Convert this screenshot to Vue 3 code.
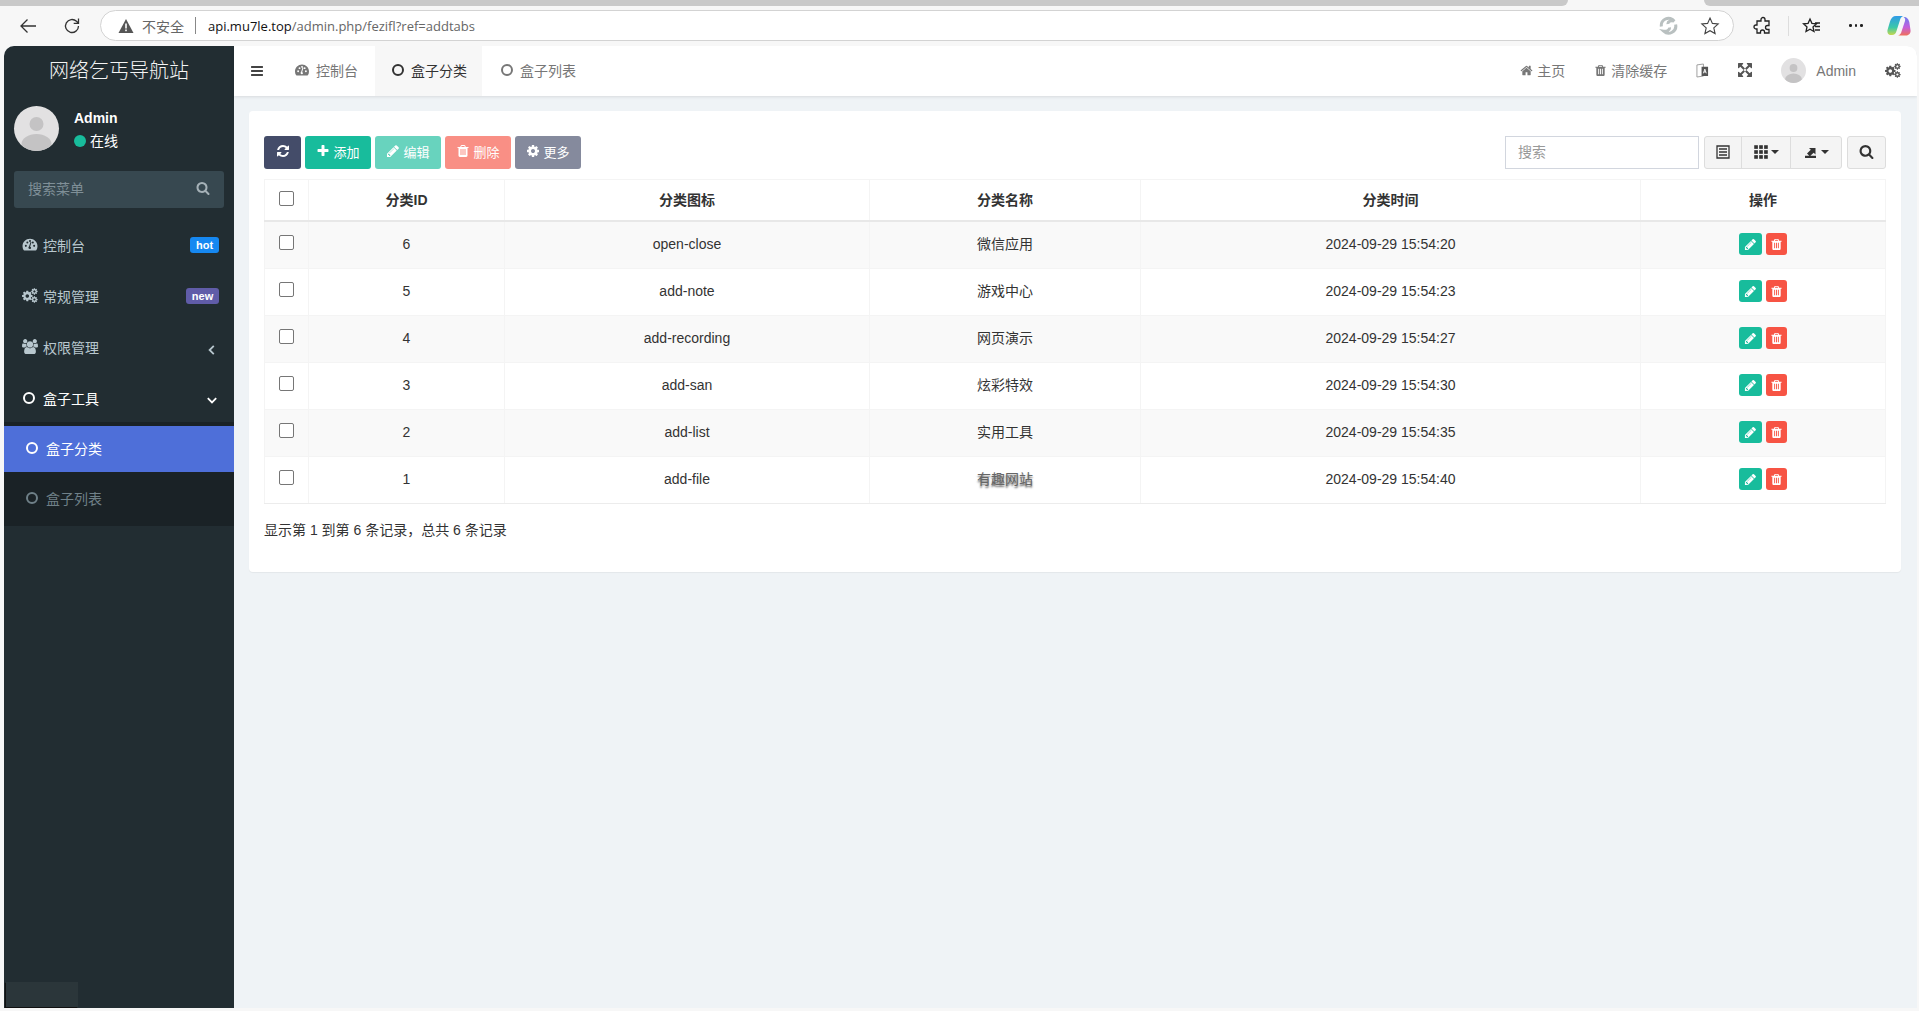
<template>
  <div class="window">
    <div class="tabstrip">
      <div class="strip-tab strip-left"></div>
      <div class="strip-tab strip-right"></div>
    </div>

    <div class="browserbar">
      <svg class="nav-icon back" viewBox="0 0 20 20"><path d="M18 10H3M9.500 3.500 3 10l6.500 6.500" /></svg>
      <svg class="nav-icon reload" viewBox="0 0 20 20"><path d="M16.500 10a6.500 6.500 0 1 1-2-4.700L16.500 7.300M16.500 2.500v4.800h-4.800" /></svg>
      <div class="addressbar">
        <svg class="warn" viewBox="0 0 16 16"><path d="M8 1 15.500 15H.5z" /><rect x="7.200" y="5.500" width="1.600" height="5" fill="#fff" /><rect x="7.200" y="11.500" width="1.600" height="1.700" fill="#fff" /></svg>
        <span class="unsafe">不安全</span>
        <i class="addr-sep"></i>
        <span class="url"><b>api.mu7le.top</b>/admin.php/fezifl?ref=addtabs</span>
        <svg class="addr-swirl" viewBox="0 0 20 20"><path d="M2.500 11A7.500 7.500 0 0 1 16 5.500C13 4 9 5.500 9.500 8.500M17.500 9A7.500 7.500 0 0 1 5 16c3 .5 6.500-1 6-4" /></svg>
        <svg class="addr-star" viewBox="0 0 20 20"><path d="m10 2 2.400 5.400 5.800.6-4.400 3.900 1.300 5.700L10 14.700l-5.100 2.900 1.300-5.700L1.800 8l5.800-.6z" /></svg>
      </div>
      <svg class="bar-icon puzzle" viewBox="0 0 20 20"><path d="M8 3.500a2 2 0 0 1 4 0V5h4v4.500h-1.500a2 2 0 0 0 0 4H16V17h-4.500v-1a2 2 0 0 0-4 0v1H4v-4H3a2 2 0 0 1 0-4h1V5h4z" /></svg>
      <i class="bar-sep"></i>
      <svg class="bar-icon favs" viewBox="0 0 20 20"><path d="m8 3 1.900 4.300 4.600.5-3.500 3.100 1 4.600L8 13.200l-4 2.300 1-4.600L1.500 7.800l4.600-.5zM13 7h5M13 10.500h5M13 14h5" /></svg>
      <div class="dots"><i></i><i></i><i></i></div>
      <svg class="copilot" viewBox="0 0 24 24">
        <defs>
          <linearGradient id="copA" x1="0" y1="0" x2="0" y2="1"><stop offset="0" stop-color="#2f9be8" /><stop offset=".6" stop-color="#3cc8a8" /><stop offset="1" stop-color="#c6d84e" /></linearGradient>
          <linearGradient id="copB" x1="0" y1="0" x2="0" y2="1"><stop offset="0" stop-color="#6d7cf0" /><stop offset=".55" stop-color="#c45fdc" /><stop offset="1" stop-color="#f0705a" /></linearGradient>
        </defs>
        <path fill="url(#copA)" d="M9 2h7.500c-2 .5-3 2-3.500 4l-3.500 11c-.7 2.500-2 4-4.500 4H4c-2.500 0-4-2-3.500-5L3 7.500C4 4 6 2 9 2z" />
        <path fill="url(#copB)" d="M16.500 3c3.500 0 5 2 5.800 5l1.200 8c.5 3-1.500 5.500-4.500 5.500H11c2-.5 3-2 3.500-4L18 7c.5-1.500 0-3-1.500-4z" />
      </svg>
    </div>

    <div class="app">
      <aside class="sidebar">
        <div class="logo">网络乞丐导航站</div>
        <div class="user-panel">
          <div class="avatar avatar-lg">
            <svg viewBox="0 0 45 45"><circle cx="22.500" cy="18" r="7" /><ellipse cx="22.500" cy="38" rx="15" ry="10" /></svg>
          </div>
          <div class="user-info">
            <div class="user-name">Admin</div>
            <div class="user-status"><i class="dot"></i>在线</div>
          </div>
        </div>
        <div class="side-search">
          <span>搜索菜单</span>
          <svg class="fa" viewBox="0 0 1792 1792"><path :d="icons.search" /></svg>
        </div>

        <ul class="menu">
          <li class="menu-item">
            <svg class="fa menu-icon" viewBox="0 0 1792 1792"><path fill-rule="evenodd" :d="icons.dashboard" /></svg>
            <span>控制台</span>
            <em class="badge badge-hot">hot</em>
          </li>
          <li class="menu-item">
            <svg class="fa menu-icon" viewBox="0 0 1920 1792">
              <g transform="translate(-100 210) scale(.82)"><path :d="icons.cog" /></g>
              <g transform="translate(1040 -40) scale(.5)"><path :d="icons.cog" /></g>
              <g transform="translate(1040 930) scale(.5)"><path :d="icons.cog" /></g>
            </svg>
            <span>常规管理</span>
            <em class="badge badge-new">new</em>
          </li>
          <li class="menu-item">
            <svg class="fa menu-icon" viewBox="0 0 1920 1792"><path :d="icons.users" /></svg>
            <span>权限管理</span>
            <svg class="chevron" viewBox="0 0 10 10"><path d="M6.500 1.500 3 5l3.500 3.500" /></svg>
          </li>
          <li class="menu-item menu-open">
            <i class="ring"></i>
            <span>盒子工具</span>
            <svg class="chevron" viewBox="0 0 10 10"><path d="M1.500 3.500 5 7l3.500-3.500" /></svg>
          </li>
        </ul>
        <ul class="submenu">
          <li class="sub-item sub-active"><i class="ring"></i><span>盒子分类</span></li>
          <li class="sub-item"><i class="ring"></i><span>盒子列表</span></li>
        </ul>
        <div class="corner-ghost"></div>
      </aside>

      <div class="main">
        <header class="topbar">
          <svg class="fa hamburger" viewBox="0 0 1792 1792"><path :d="icons.bars" /></svg>
          <nav class="tabs">
            <div class="tab">
              <svg class="fa" viewBox="0 0 1792 1792"><path fill-rule="evenodd" :d="icons.dashboard" /></svg>
              <span>控制台</span>
            </div>
            <div class="tab tab-active"><i class="ring"></i><span>盒子分类</span></div>
            <div class="tab"><i class="ring"></i><span>盒子列表</span></div>
          </nav>
          <div class="top-actions">
            <div class="top-link">
              <svg class="fa" viewBox="0 0 1792 1792"><path :d="icons.home" /></svg>
              <span>主页</span>
            </div>
            <div class="top-link">
              <svg class="fa" viewBox="0 0 1792 1792"><path :d="icons.trash" /></svg>
              <span>清除缓存</span>
            </div>
            <svg class="translate" viewBox="0 0 14 16">
              <path d="M1 2 8 1v13l-7 1z" fill="#fff" stroke="#999" stroke-width="1" />
              <path d="M6 4h7v10H6z" fill="#555" />
              <path d="M8 11l1.500-4.500L11 11M8.500 9.500h2" stroke="#fff" stroke-width="1" fill="none" />
            </svg>
            <svg class="fa expand" viewBox="128 128 1536 1536"><path :d="icons.expand" /></svg>
            <div class="top-user">
              <div class="avatar avatar-sm">
                <svg viewBox="0 0 45 45"><circle cx="22.500" cy="18" r="7" /><ellipse cx="22.500" cy="38" rx="15" ry="10" /></svg>
              </div>
              <span>Admin</span>
            </div>
            <svg class="fa top-cogs" viewBox="0 0 1920 1792">
              <g transform="translate(-100 210) scale(.82)"><path :d="icons.cog" /></g>
              <g transform="translate(1040 -40) scale(.5)"><path :d="icons.cog" /></g>
              <g transform="translate(1040 930) scale(.5)"><path :d="icons.cog" /></g>
            </svg>
          </div>
        </header>

        <section class="content">
          <div class="card">
            <div class="toolbar">
              <button class="btn btn-navy btn-refresh">
                <svg class="fa" viewBox="0 0 1792 1792"><path :d="icons.refresh" /></svg>
              </button>
              <button class="btn btn-teal">
                <svg class="fa" viewBox="0 0 1792 1792"><path :d="icons.plus" /></svg>添加
              </button>
              <button class="btn btn-teal btn-faded">
                <svg class="fa" viewBox="0 0 1792 1792"><path :d="icons.pencil" /></svg>编辑
              </button>
              <button class="btn btn-red btn-faded">
                <svg class="fa" viewBox="0 0 1792 1792"><path :d="icons.trash" /></svg>删除
              </button>
              <button class="btn btn-navy btn-faded">
                <svg class="fa" viewBox="0 0 1792 1792"><path :d="icons.cog" /></svg>更多
              </button>

              <input class="table-search" placeholder="搜索" />
              <div class="btn-group">
                <button class="tool-btn tool-list">
                  <svg viewBox="0 0 14 14" class="tool-svg"><path d="M1 1h12v12H1zM3 4h8M3 7h8M3 10h8" fill="none" stroke="#333" stroke-width="1.300" /></svg>
                </button>
                <button class="tool-btn tool-cols">
                  <svg viewBox="0 0 13 13" class="tool-svg">
                    <rect v-for="c in gridCells" :key="c.k" :x="c.x" :y="c.y" width="3.400" height="3.400" fill="#333" />
                  </svg>
                  <i class="caret"></i>
                </button>
                <button class="tool-btn tool-export">
                  <svg viewBox="0 0 14 14" class="tool-svg"><path d="M1 10.800h11V13H1zM3 8.500 6.800 4.800 5 3h6.500v6.500L9.700 7.700 5.800 11.200z" fill="#333" /></svg>
                  <i class="caret"></i>
                </button>
              </div>
              <button class="tool-btn tool-search">
                <svg class="fa" viewBox="0 0 1792 1792"><path :d="icons.search" /></svg>
              </button>
            </div>

            <table class="grid">
              <thead>
                <tr>
                  <th><i class="check"></i></th>
                  <th>分类ID</th>
                  <th>分类图标</th>
                  <th>分类名称</th>
                  <th>分类时间</th>
                  <th>操作</th>
                </tr>
              </thead>
              <tbody>
                <tr v-for="row in rows" :key="row.id">
                  <td><i class="check"></i></td>
                  <td>{{ row.id }}</td>
                  <td>{{ row.icon }}</td>
                  <td class="name-cell"><span :class="{ smeared: row.id === 1 }">{{ row.name }}</span></td>
                  <td>{{ row.time }}</td>
                  <td>
                    <div class="ops">
                      <span class="op op-edit"><svg class="fa" viewBox="0 0 1792 1792"><path :d="icons.pencil" /></svg></span>
                      <span class="op op-del"><svg class="fa" viewBox="0 0 1792 1792"><path :d="icons.trash" /></svg></span>
                    </div>
                  </td>
                </tr>
              </tbody>
            </table>

            <div class="pager">显示第 1 到第 6 条记录，总共 6 条记录</div>
          </div>
        </section>
      </div>
    </div>
  </div>
</template>

<script setup>
const rows = [
  { id: 6, icon: 'open-close', name: '微信应用', time: '2024-09-29 15:54:20' },
  { id: 5, icon: 'add-note', name: '游戏中心', time: '2024-09-29 15:54:23' },
  { id: 4, icon: 'add-recording', name: '网页演示', time: '2024-09-29 15:54:27' },
  { id: 3, icon: 'add-san', name: '炫彩特效', time: '2024-09-29 15:54:30' },
  { id: 2, icon: 'add-list', name: '实用工具', time: '2024-09-29 15:54:35' },
  { id: 1, icon: 'add-file', name: '有趣网站', time: '2024-09-29 15:54:40' }
]

const gridCells = []
for (let y = 0; y < 3; y++) {
  for (let x = 0; x < 3; x++) {
    gridCells.push({ k: x + '-' + y, x: x * 4.600 + .200, y: y * 4.600 + .200 })
  }
}

const icons = {
  search: 'M1216 832q0-185-131.500-316.500t-316.500-131.500-316.500 131.500-131.500 316.500 131.500 316.500 316.500 131.500 316.500-131.500 131.500-316.500zm512 832q0 52-38 90t-90 38q-54 0-90-38l-343-342q-179 124-399 124-143 0-273.500-55.500t-225-150-150-225-55.500-273.500 55.500-273.500 150-225 225-150 273.500-55.500 273.500 55.500 225 150 150 225 55.500 273.500q0 220-124 399l343 343q37 37 37 90z',
  plus: 'M1600 736v192q0 40-28 68t-68 28h-416v416q0 40-28 68t-68 28h-192q-40 0-68-28t-28-68v-416h-416q-40 0-68-28t-28-68v-192q0-40 28-68t68-28h416v-416q0-40 28-68t68-28h192q40 0 68 28t28 68v416h416q40 0 68 28t28 68z',
  pencil: 'M491 1536l91-91-235-235-91 91v107h128v128h107zm523-928q0-22-22-22-10 0-17 7l-542 542q-7 7-7 17 0 22 22 22 10 0 17-7l542-542q7-7 7-17zm-54-192l416 416-832 832h-416v-416zm683 96q0 53-37 90l-166 166-416-416 166-165q36-38 90-38 53 0 91 38l235 234q37 39 37 91z',
  trash: 'M704 1376v-704q0-14-9-23t-23-9h-64q-14 0-23 9t-9 23v704q0 14 9 23t23 9h64q14 0 23-9t9-23zm256 0v-704q0-14-9-23t-23-9h-64q-14 0-23 9t-9 23v704q0 14 9 23t23 9h64q14 0 23-9t9-23zm256 0v-704q0-14-9-23t-23-9h-64q-14 0-23 9t-9 23v704q0 14 9 23t23 9h64q14 0 23-9t9-23zm-544-992h448l-48-117q-7-9-17-11h-317q-10 2-17 11zm928 32v64q0 14-9 23t-23 9h-96v948q0 83-47 143.500t-113 60.500h-832q-66 0-113-58.500t-47-141.500v-952h-96q-14 0-23-9t-9-23v-64q0-14 9-23t23-9h309l70-167q15-37 54-63t79-26h320q40 0 79 26t54 63l70 167h309q14 0 23 9t9 23z',
  home: 'M1472 992v480q0 26-19 45t-45 19h-384v-384h-256v384h-384q-26 0-45-19t-19-45v-480q0-1 .5-3t.5-3l575-474 575 474q1 2 1 6zm223-69l-62 74q-8 9-21 11h-3q-13 0-21-7l-692-577-692 577q-12 8-24 7-13-2-21-11l-62-74q-8-10-7-23.500t11-21.500l719-599q32-26 76-26t76 26l244 204v-195q0-14 9-23t23-9h192q14 0 23 9t9 23v408l219 182q10 8 11 21.500t-7 23.500z',
  cog: 'M1152 896q0-106-75-181t-181-75-181 75-75 181 75 181 181 75 181-75 75-181zm512-109v222q0 12-8 23t-20 13l-185 28q-19 54-39 91 35 50 107 138 10 12 10 25t-9 23q-27 37-99 108t-94 71q-12 0-26-9l-138-108q-44 23-91 38-16 136-29 186-7 28-36 28h-222q-14 0-24.500-8.500t-11.500-21.500l-28-184q-49-16-90-37l-141 107q-10 9-25 9-14 0-25-11-126-114-165-168-7-10-7-23 0-12 8-23 15-21 51-66.500t54-70.500q-27-50-41-99l-183-27q-13-2-21-12.500t-8-23.500v-222q0-12 8-23t19-13l186-28q14-46 39-92-40-57-107-138-10-12-10-24 0-10 9-23 26-36 98.500-107.500t94.500-71.500q13 0 26 10l138 107q44-23 91-38 16-136 29-186 7-28 36-28h222q14 0 24.500 8.500t11.500 21.500l28 184q49 16 90 37l142-107q9-9 24-9 13 0 25 10 129 119 165 170 7 8 7 22 0 12-8 23-15 21-51 66.500t-54 70.500q26 50 41 98l183 28q13 2 21 12.500t8 23.500z',
  refresh: 'M1639 1056q0 5-1 7-64 268-268 434.500t-478 166.500q-146 0-282.500-55t-243.500-157l-129 129q-19 19-45 19t-45-19-19-45v-448q0-26 19-45t45-19h448q26 0 45 19t19 45-19 45l-137 137q71 66 161 102t187 36q134 0 250-65t186-179q11-17 53-117 8-23 30-23h192q13 0 22.500 9.500t9.500 22.500zm25-800v448q0 26-19 45t-45 19h-448q-26 0-45-19t-19-45 19-45l138-138q-148-137-349-137-134 0-250 65t-186 179q-11 17-53 117-8 23-30 23h-199q-13 0-22.500-9.500t-9.500-22.500v-7q65-268 270-434.500t480-166.500q146 0 284 55.500t245 156.500l130-129q19-19 45-19t45 19 19 45z',
  bars: 'M1664 1344v128q0 26-19 45t-45 19h-1408q-26 0-45-19t-19-45v-128q0-26 19-45t45-19h1408q26 0 45 19t19 45zm0-512v128q0 26-19 45t-45 19h-1408q-26 0-45-19t-19-45v-128q0-26 19-45t45-19h1408q26 0 45 19t19 45zm0-512v128q0 26-19 45t-45 19h-1408q-26 0-45-19t-19-45v-128q0-26 19-45t45-19h1408q26 0 45 19t19 45z',
  dashboard: 'M896 200C410 200 0 590 0 1100c0 170 45 320 125 450 20 30 50 50 90 50h1362c40 0 70-20 90-50 80-130 125-280 125-450 0-510-410-900-896-900zM400 1180a120 120 0 1 1 0-240 120 120 0 0 1 0 240zm180-400a120 120 0 1 1 0-240 120 120 0 0 1 0 240zm316-170a120 120 0 1 1 0-240 120 120 0 0 1 0 240zM1030 1270a160 160 0 1 1-250-130l170-520c12-30 44-44 74-34s44 40 34 70l-150 520c50 10 96 44 122 94zm202-490a120 120 0 1 1 0-240 120 120 0 0 1 0 240zm160 400a120 120 0 1 1 0-240 120 120 0 0 1 0 240z',
  users: 'M593 896q-162 5-265 128H194q-82 0-138-40.500T0 865q0-353 124-353 6 0 43.500 21t97.500 42.500T384 597q67 0 133-23-5 37-5 66 0 139 81 256zm1071 637q0 120-73 189.500t-194 69.500H523q-121 0-194-69.500T256 1533q0-53 3.500-103.500t14-109T300 1212t43-97.500 62-81 85.500-53.500T602 960q10 0 43 21.500t73 48 107 48 135 21.500 135-21.500 107-48 73-48 43-21.500q61 0 111.500 20t85.500 53.500 62 81 43 97.500 26.500 108.500 14 109 3.500 103.500zM640 256q0 106-75 181t-181 75-181-75-75-181 75-181T384 0t181 75 75 181zm704 384q0 159-112.500 271.500T960 1024 688.500 911.500 576 640t112.500-271.500T960 256t271.500 112.500T1344 640zm576 225q0 78-56 118.500t-138 40.500h-134q-103-123-265-128 81-117 81-256 0-29-5-66 66 23 133 23 59 0 119-21.500t97.500-42.500 43.500-21q124 0 124 353zm-128-609q0 106-75 181t-181 75-181-75-75-181 75-181 181-75 181 75 75 181z',
  expand: 'M883 1056q0 13-10 23l-332 332 144 144q19 19 19 45t-19 45-45 19H192q-26 0-45-19t-19-45v-448q0-26 19-45t45-19 45 19l144 144 332-332q10-10 23-10t23 10l114 114q10 10 10 23zm781-864v448q0 26-19 45t-45 19-45-19l-144-144-332 332q-10 10-23 10t-23-10L919 759q-10-10-10-23t10-23l332-332-144-144q-19-19-19-45t19-45 45-19h448q26 0 45 19t19 45zM883 736q0 13-10 23L759 873q-10 10-23 10t-23-10L381 541 237 685q-19 19-45 19t-45-19-19-45V192q0-26 19-45t45-19h448q26 0 45 19t19 45-19 45L541 381l332 332q10 10 10 23zm781 416v448q0 26-19 45t-45 19h-448q-26 0-45-19t-19-45 19-45l144-144-332-332q-10-10-10-23t10-23l114-114q10-10 23-10t23 10l332 332 144-144q19-19 45-19t45 19 19 45z'
}
</script>

<style scoped>
.window {
  height: 1011px;
  display: flex;
  flex-direction: column;
  overflow: hidden;
  background: #f7f7f7;
  font-family: "Liberation Sans", "Noto Sans CJK SC", sans-serif;
  font-size: 14px;
  color: #333;
}

.tabstrip {
  height: 6px;
  display: flex;
  justify-content: space-between;
  flex-shrink: 0;
  background: #f7f7f7;
}
.strip-tab {
  background: #c9c9c9;
}
.strip-left {
  width: 1568px;
  border-bottom-right-radius: 6px;
}
.strip-right {
  width: 215px;
  border-bottom-left-radius: 6px;
}

.browserbar {
  height: 40px;
  flex-shrink: 0;
  display: flex;
  align-items: center;
  padding-bottom: 1px;
  box-sizing: border-box;
}
.nav-icon {
  width: 20px;
  height: 20px;
  fill: none;
  stroke: #333;
  stroke-width: 1.300;
}
.back {
  margin-left: 18px;
}
.reload {
  margin-left: 24px;
}
.addressbar {
  width: 1634px;
  height: 31px;
  margin-left: 18px;
  box-sizing: border-box;
  display: flex;
  align-items: center;
  background: #fff;
  border: 1px solid #d3d3d3;
  border-radius: 16px;
  padding-left: 17px;
}
.warn {
  width: 16px;
  height: 16px;
  fill: #555;
}
.unsafe {
  margin-left: 8px;
  font-family: "Noto Sans CJK SC", sans-serif;
  font-size: 14px;
  color: #666;
}
.addr-sep {
  width: 1px;
  height: 17px;
  margin-left: 11px;
  background: #888;
}
.url {
  margin-left: 12px;
  font-family: "Open Sans", sans-serif;
  font-size: 13px;
  color: #666;
}
.url b {
  font-weight: 400;
  color: #111;
}
.addr-swirl {
  margin-left: auto;
  width: 19px;
  height: 19px;
  fill: none;
  stroke: #b9c0c0;
  stroke-width: 3.200;
}
.addr-star {
  margin: 0 13px 0 22px;
  width: 20px;
  height: 20px;
  fill: none;
  stroke: #444;
  stroke-width: 1.100;
}
.bar-icon {
  fill: none;
  stroke: #222;
  stroke-width: 1.300;
  width: 20px;
  height: 20px;
}
.puzzle {
  margin-left: 19px;
}
.bar-sep {
  width: 1px;
  height: 20px;
  background: #ddd;
  margin-left: 15px;
}
.favs {
  margin-left: 13px;
}
.dots {
  display: flex;
  gap: 3px;
  margin-left: 27px;
}
.dots i {
  width: 2.500px;
  height: 2.500px;
  background: #222;
  border-radius: 50%;
}
.copilot {
  width: 24px;
  height: 24px;
  margin-left: 24px;
}

.app {
  height: 962px;
  margin: 0 2px 0 4px;
  flex-shrink: 0;
  display: flex;
  background: #eff3f6;
  border-radius: 10px 10px 0 0;
  overflow: hidden;
}

.sidebar {
  width: 230px;
  flex-shrink: 0;
  background: #222d32;
  position: relative;
}
.logo {
  height: 50px;
  line-height: 50px;
  text-align: center;
  font-size: 20px;
  color: #f4f4f4;
  font-weight: 300;
}
.user-panel {
  display: flex;
  padding: 10px 0 0 10px;
  height: 65px;
}
.avatar {
  border-radius: 50%;
  overflow: hidden;
  background: #e2e1e2;
  flex-shrink: 0;
}
.avatar svg {
  display: block;
  width: 100%;
  height: 100%;
  fill: #c4c3c4;
}
.avatar-lg {
  width: 45px;
  height: 45px;
}
.avatar-sm {
  width: 25px;
  height: 25px;
}
.user-info {
  margin-left: 15px;
  color: #fff;
}
.user-name {
  font-weight: 700;
  font-size: 14px;
  line-height: 20px;
  margin-top: 2px;
}
.user-status {
  display: flex;
  align-items: center;
  font-size: 14px;
  line-height: 20px;
  margin-top: 3px;
}
.dot {
  width: 12px;
  height: 12px;
  border-radius: 50%;
  background: #18bc9c;
  margin-right: 4px;
}
.side-search {
  margin: 0 10px;
  height: 37px;
  box-sizing: border-box;
  padding: 0 14px 3px;
  display: flex;
  align-items: center;
  justify-content: space-between;
  background: #374850;
  border-radius: 3px;
  color: #7f8f97;
  font-size: 14px;
}
.side-search .fa {
  color: #a5b1b7;
  width: 14px;
  height: 14px;
}
.menu {
  list-style: none;
  margin: 12px 0 0;
  padding: 0;
}
.menu-item {
  height: 51px;
  display: flex;
  align-items: center;
  padding: 0 15px 2px 18px;
  box-sizing: border-box;
  color: #b8c7ce;
}
.menu-icon {
  width: 16px;
  height: 15px;
  margin-right: 5px;
}
.badge {
  margin-left: auto;
  font-style: normal;
  font-weight: 700;
  font-size: 11px;
  line-height: 16px;
  height: 16px;
  border-radius: 3px;
  color: #fff;
  text-align: center;
}
.badge-hot {
  width: 29px;
  background: #1688f1;
}
.badge-new {
  width: 33px;
  background: #605ca8;
}
.chevron {
  margin-left: auto;
  margin-top: 6px;
  width: 12px;
  height: 12px;
  margin-right: 1px;
  fill: none;
  stroke: currentColor;
  stroke-width: 1.500;
}
.ring {
  display: block;
  width: 12px;
  height: 12px;
  box-sizing: border-box;
  border: 2px solid currentColor;
  border-radius: 50%;
  flex-shrink: 0;
}
.menu-open {
  color: #fff;
  padding-left: 19px;
}
.menu-open .ring {
  margin-right: 8px;
}
.menu-open .chevron {
  margin-top: 4px;
}
.submenu {
  list-style: none;
  margin: -2px 0 0;
  padding: 4px 0 0;
  background: #1a2226;
}
.sub-item {
  height: 54px;
  display: flex;
  align-items: center;
  padding: 0 0 2px 22px;
  color: #6f8088;
  box-sizing: border-box;
}
.sub-item .ring {
  margin-right: 8px;
}
.sub-active {
  height: 46px;
  color: #fff;
  background: #4e6fd9;
}
.corner-ghost {
  position: absolute;
  left: 2px;
  bottom: 1px;
  width: 72px;
  height: 25px;
  background: #2b363a;
  box-shadow: -1px 1px 1px #111;
}

.main {
  flex: 1;
  min-width: 0;
  display: flex;
  flex-direction: column;
}
.topbar {
  height: 50px;
  flex-shrink: 0;
  display: flex;
  align-items: stretch;
  background: #fff;
  box-shadow: 0 1px 3px rgba(0, 0, 0, .1);
  color: #777;
  position: relative;
}
.hamburger {
  width: 14px;
  height: 14px;
  align-self: center;
  margin: 0 14px 0 16px;
  color: #444;
}
.tabs {
  display: flex;
  gap: 2px;
}
.tab {
  display: flex;
  align-items: center;
  gap: 7px;
  padding: 0 15px 2px 17px;
}
.tab .fa {
  width: 14px;
  height: 14px;
}
.tab .ring {
  margin-right: 0;
}
.tab-active {
  background: #f7f7f7;
  color: #333;
}
.top-actions {
  margin-left: auto;
  display: flex;
  align-items: center;
  gap: 29px;
  padding: 0 16px 2px 0;
}
.top-link {
  display: flex;
  align-items: center;
  gap: 4px;
}
.top-link .fa {
  width: 13px;
  height: 13px;
}
.translate {
  width: 13px;
  height: 15px;
}
.expand {
  width: 14px;
  height: 14px;
  color: #555;
}
.top-user {
  display: flex;
  align-items: center;
  gap: 10px;
}
.top-user span {
  padding-top: 1px;
}
.top-cogs {
  width: 16px;
  height: 15px;
  color: #555;
}

.content {
  padding: 15px 16px 0 15px;
}
.card {
  height: 461px;
  box-sizing: border-box;
  background: #fff;
  border-radius: 4px;
  padding: 25px 15px 0;
  box-shadow: 0 1px 1px rgba(0, 0, 0, .05);
}
.toolbar {
  display: flex;
  align-items: stretch;
  height: 33px;
  margin-bottom: 10px;
}
.btn {
  border: 0;
  border-radius: 3px;
  padding: 0 0 3px;
  margin: 0 4px 0 0;
  width: 66px;
  color: #fff;
  font: inherit;
  font-size: 13px;
  display: flex;
  align-items: center;
  justify-content: center;
  gap: 3px;
}
.btn .fa {
  width: 14px;
  height: 14px;
}
.btn-refresh {
  width: 37px;
}
.btn-navy {
  background: #444c69;
}
.btn-teal {
  background: #18bc9c;
}
.btn-red {
  background: #f75444;
}
.btn-faded {
  opacity: .65;
}
.table-search {
  margin-left: auto;
  width: 194px;
  box-sizing: border-box;
  border: 1px solid #d2d6de;
  padding: 0 12px 2px;
  font: inherit;
  font-size: 14px;
  outline: none;
  color: #555;
}
.table-search::placeholder {
  color: #999;
}
.btn-group {
  display: flex;
  margin-left: 5px;
}
.tool-btn {
  border: 1px solid #ddd;
  background: #f4f4f4;
  padding: 0 0 2px;
  display: flex;
  align-items: center;
  justify-content: center;
  gap: 3px;
  color: #333;
  box-sizing: border-box;
}
.tool-svg {
  width: 14px;
  height: 14px;
}
.tool-list {
  width: 38px;
  border-radius: 3px 0 0 3px;
}
.tool-cols {
  width: 50px;
  margin-left: -1px;
}
.tool-export {
  width: 52px;
  margin-left: -1px;
  border-radius: 0 3px 3px 0;
}
.tool-search {
  width: 39px;
  margin-left: 5px;
  border-radius: 3px;
}
.tool-search .fa {
  width: 15px;
  height: 15px;
}
.caret {
  width: 0;
  height: 0;
  border-top: 4px solid #333;
  border-left: 4px solid transparent;
  border-right: 4px solid transparent;
}

.grid {
  width: 1622px;
  table-layout: fixed;
  border-collapse: collapse;
  font-size: 14px;
  color: #333;
}
.grid th,
.grid td {
  border: 1px solid #f4f4f4;
  text-align: center;
  padding: 0 0 2px;
}
.grid th {
  height: 38px;
  font-weight: 700;
  border-bottom: 2px solid #e8e8e8;
}
.grid td {
  height: 44px;
}
.grid .name-cell {
  padding-bottom: 4px;
  height: 42px;
}
.grid th:nth-child(1) {
  width: 43px;
}
.grid th:nth-child(2) {
  width: 195px;
}
.grid th:nth-child(3) {
  width: 364px;
}
.grid th:nth-child(4) {
  width: 270px;
}
.grid th:nth-child(5) {
  width: 499px;
}
.grid tbody tr:nth-child(odd) td {
  background: #f9f9f9;
}
.grid tbody tr:last-child td {
  border-bottom-color: #ececec;
}
.check {
  display: block;
  width: 13px;
  height: 13px;
  margin: -3px auto 0;
  border: 1px solid #767676;
  border-radius: 2px;
  background: #fff;
}
.grid th .check {
  margin-top: -1px;
}
.smeared {
  color: #666;
  text-shadow: 0 2px 2px rgba(0, 0, 0, .65);
}
.ops {
  display: flex;
  justify-content: center;
  gap: 4px;
}
.op {
  height: 22px;
  border-radius: 3px;
  color: #fff;
  display: flex;
  align-items: center;
  justify-content: center;
}
.op .fa {
  width: 13px;
  height: 13px;
}
.op-edit {
  width: 23px;
  background: #18bc9c;
}
.op-del {
  width: 21px;
  background: #f75444;
}
.pager {
  margin-top: 16px;
  line-height: 20px;
  font-size: 14px;
  color: #333;
}

.fa {
  fill: currentColor;
  flex-shrink: 0;
  display: block;
}
</style>

<style>
html,
body {
  background: #f0f0f0;
  overflow: hidden;
}
</style>
